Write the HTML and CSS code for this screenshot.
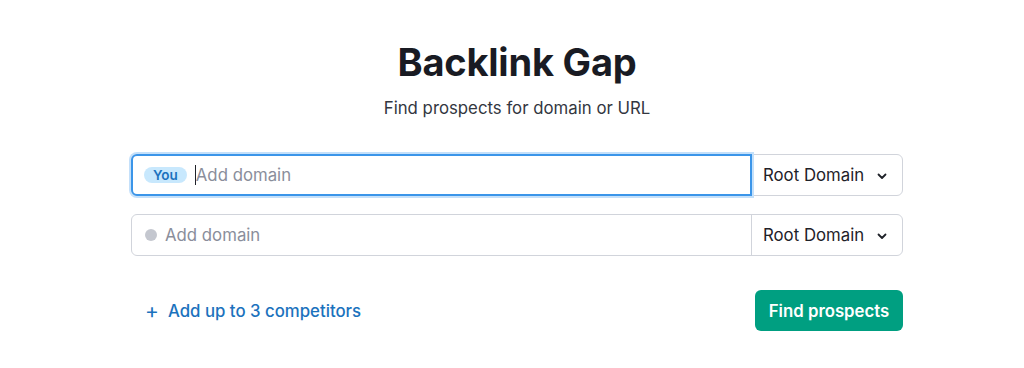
FILE: index.html
```html
<!DOCTYPE html>
<html lang="en">
<head>
<meta charset="utf-8">
<title>Backlink Gap</title>
<link rel="stylesheet" href="styles.css">
</head>
<body>
<main class="page">
  <h1 class="title">Backlink Gap</h1>
  <p class="subtitle">Find prospects for domain or URL</p>
  <div class="form">
    <div class="row row-focus">
      <div class="field">
        <span class="badge">You</span>
        <span class="caret"></span>
        <span class="placeholder">Add domain</span>
      </div>
      <div class="select">
        <span>Root Domain</span>
        <svg class="chev" width="12" height="12" viewBox="0 0 12 12"><path d="M2.5 4.5 L6 8 L9.5 4.5" fill="none" stroke="#1f2229" stroke-width="1.8" stroke-linecap="round" stroke-linejoin="round"/></svg>
      </div>
    </div>
    <div class="row">
      <div class="field">
        <span class="dot"></span>
        <span class="placeholder">Add domain</span>
      </div>
      <div class="select">
        <span>Root Domain</span>
        <svg class="chev" width="12" height="12" viewBox="0 0 12 12"><path d="M2.5 4.5 L6 8 L9.5 4.5" fill="none" stroke="#1f2229" stroke-width="1.8" stroke-linecap="round" stroke-linejoin="round"/></svg>
      </div>
    </div>
    <div class="actions">
      <a class="add-link" href="#"><span class="plus">+</span>Add up to 3 competitors</a>
      <button class="btn">Find prospects</button>
    </div>
  </div>
</main>
</body>
</html>
```
FILE: styles.css
```css
* { box-sizing: border-box; }
html, body { margin: 0; padding: 0; background: #fff; }
body {
  font-family: Inter, "Noto Sans", sans-serif;
  color: #1f2229;
  width: 1024px;
  height: 368px;
  overflow: hidden;
}
.page {
  display: flex;
  flex-direction: column;
  align-items: center;
  padding-top: 38px;
  padding-left: 10px;
}
.title {
  margin: 0;
  font-size: 38px;
  font-weight: 700;
  line-height: 48px;
  letter-spacing: -0.2px;
  color: #191b23;
}
.subtitle {
  margin: 12px 0 0;
  font-size: 16.8px;
  line-height: 20px;
  color: #333741;
}
.form {
  width: 772px;
  margin-top: 36px;
  display: flex;
  flex-direction: column;
  gap: 18px;
}
.row {
  display: flex;
  height: 42px;
  border: 1px solid #d1d4db;
  border-radius: 6px;
  background: #fff;
}
.field {
  flex: 1;
  display: flex;
  align-items: center;
  padding-left: 13px;
}
.row-focus .field {
  border: 2px solid #3b95e9;
  border-radius: 6px 0 0 6px;
  margin: -1px -1px -1px -1px;
  box-shadow: 0 0 0 2px #c4e0fa;
  padding-left: 11px;
  position: relative;
  z-index: 1;
}
.badge {
  background: #c8e8fd;
  color: #1b72bd;
  font-size: 13.5px;
  font-weight: 600;
  line-height: 16px;
  padding: 0 9px;
  border-radius: 8px;
  margin-right: 8px;
}
.caret {
  width: 1px;
  height: 20px;
  background: #1f2229;
}
.dot {
  width: 12px;
  height: 12px;
  border-radius: 50%;
  background: #c4c7cf;
  margin-right: 8px;
}
.placeholder {
  font-size: 16.8px;
  color: #8a8e9b;
}
.select {
  width: 151px;
  display: flex;
  align-items: center;
  justify-content: space-between;
  padding: 0 14px 0 11px;
  font-size: 16.8px;
  color: #1f2229;
  border-left: 1px solid #d1d4db;
}
.chev { margin-top: 2px; }
.actions {
  display: flex;
  justify-content: space-between;
  align-items: center;
  margin-top: 16px;
}
.add-link {
  color: #1b72bd;
  text-decoration: none;
  font-size: 16.8px;
  font-weight: 500;
  padding-left: 14px;
  display: flex;
  align-items: center;
}
.plus {
  font-size: 21px;
  font-weight: 400;
  margin-right: 9px;
  line-height: 20px;
}
.btn {
  background: #009f81;
  color: #fff;
  border: none;
  border-radius: 6px;
  font-family: Inter, "Noto Sans", sans-serif;
  font-size: 16.8px;
  font-weight: 600;
  height: 41px;
  width: 148px;
  cursor: pointer;
}
```
